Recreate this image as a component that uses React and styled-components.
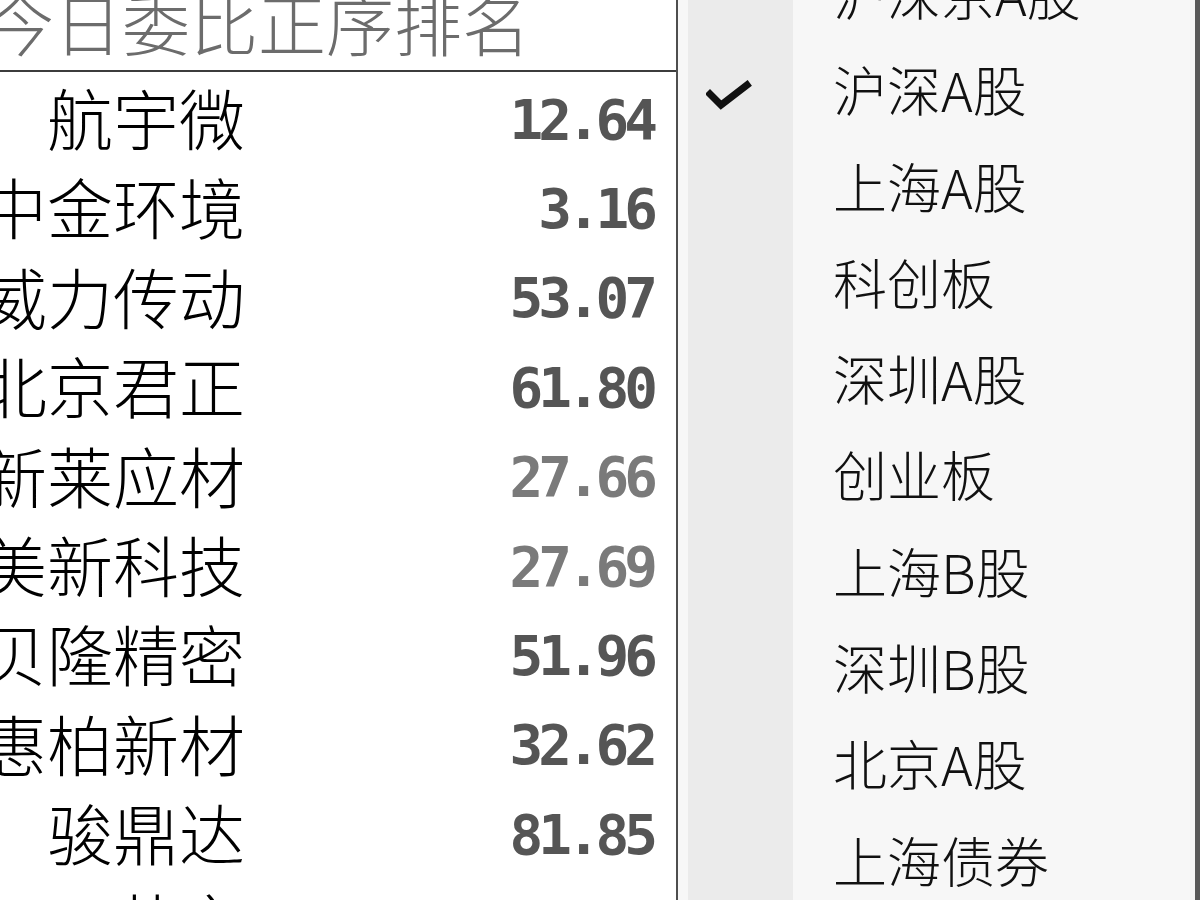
import React from "react";
import styled, { createGlobalStyle } from "styled-components";

const GlobalStyle = createGlobalStyle`
  html, body {
    margin: 0;
    padding: 0;
    background: #fff;
    overflow: hidden;
  }
`;

const rows = [
  { name: "航宇微", ratio: "12.64", tone: "dark" },
  { name: "中金环境", ratio: "3.16", tone: "dark" },
  { name: "威力传动", ratio: "53.07", tone: "dark" },
  { name: "北京君正", ratio: "61.80", tone: "dark" },
  { name: "新莱应材", ratio: "27.66", tone: "light" },
  { name: "美新科技", ratio: "27.69", tone: "light" },
  { name: "贝隆精密", ratio: "51.96", tone: "dark" },
  { name: "惠柏新材", ratio: "32.62", tone: "dark" },
  { name: "骏鼎达", ratio: "81.85", tone: "dark" },
  { name: "五芳斋", ratio: "40.12", tone: "dark" },
];

const markets = [
  "沪深京A股",
  "沪深A股",
  "上海A股",
  "科创板",
  "深圳A股",
  "创业板",
  "上海B股",
  "深圳B股",
  "北京A股",
  "上海债券",
  "深圳债券",
];

export default function App() {
  return (
    <Page>
      <GlobalStyle />
      <RankPanel>
        <Title>今日委比正序排名</Title>
        <RankList>
          {rows.map((row) => (
            <RankRow key={row.name}>
              <StockName>{row.name}</StockName>
              <Ratio tone={row.tone}>{row.ratio}</Ratio>
            </RankRow>
          ))}
        </RankList>
      </RankPanel>
      <Menu>
        <MenuList>
          {markets.map((label) => (
            <MenuItem key={label}>
              <CheckCell>{label === "沪深A股" && <CheckMark />}</CheckCell>
              <MenuLabel>{label}</MenuLabel>
            </MenuItem>
          ))}
        </MenuList>
      </Menu>
    </Page>
  );
}

function CheckMark() {
  return (
    <svg width="46" height="32" viewBox="0 0 46 32">
      <polyline
        points="4,14 15,25 41,5"
        fill="none"
        stroke="#111"
        strokeWidth="7"
        strokeLinejoin="miter"
        strokeLinecap="square"
      />
    </svg>
  );
}

const Page = styled.div`
  display: flex;
  width: 1200px;
  height: 900px;
  overflow: hidden;
  font-family: "Noto Sans CJK SC", "Noto Sans", sans-serif;
`;

const RankPanel = styled.div`
  width: 676px;
  flex-shrink: 0;
  height: 900px;
  background: #fff;
  border-right: 2px solid #4e4e4e;
  overflow: hidden;
`;

const Title = styled.div`
  height: 70px;
  line-height: 44px;
  font-size: 68px;
  font-weight: 300;
  color: #6c6c6c;
  text-indent: -14px;
  white-space: nowrap;
  border-bottom: 2px solid #3c3c3c;
`;

const RankList = styled.div`
  display: flex;
  flex-direction: column;
`;

const RankRow = styled.div`
  display: flex;
  align-items: center;
  height: 89.4px;
  flex-shrink: 0;
`;

const StockName = styled.div`
  width: 245px;
  flex-shrink: 0;
  display: flex;
  justify-content: flex-end;
  white-space: nowrap;
  font-size: 66px;
  font-weight: 300;
  line-height: 89.4px;
  color: #000;
`;

const Ratio = styled.div`
  width: 408px;
  text-align: right;
  font-family: "DejaVu Sans Mono", "Liberation Mono", monospace;
  font-weight: bold;
  font-size: 56px;
  letter-spacing: -5px;
  line-height: 1;
  padding-top: 6px;
  color: ${(p) => (p.tone === "light" ? "#7a7a7a" : "#555")};
`;

const Menu = styled.div`
  flex: 1;
  height: 900px;
  background: #f7f7f7;
  padding-left: 10px;
  padding-right: 2px;
  border-right: 5px solid #5a5a5a;
  overflow: hidden;
`;

const MenuList = styled.div`
  display: flex;
  flex-direction: column;
  margin-top: -55px;
`;

const MenuItem = styled.div`
  display: flex;
  height: 96.3px;
  flex-shrink: 0;
`;

const CheckCell = styled.div`
  width: 105px;
  flex-shrink: 0;
  background: #ebebeb;
  display: flex;
  align-items: center;
  padding-left: 18px;
  padding-top: 14px;
  box-sizing: border-box;
`;

const MenuLabel = styled.div`
  padding-left: 40px;
  font-size: 54px;
  font-weight: 300;
  line-height: 96.3px;
  color: #111;
  white-space: nowrap;
`;
